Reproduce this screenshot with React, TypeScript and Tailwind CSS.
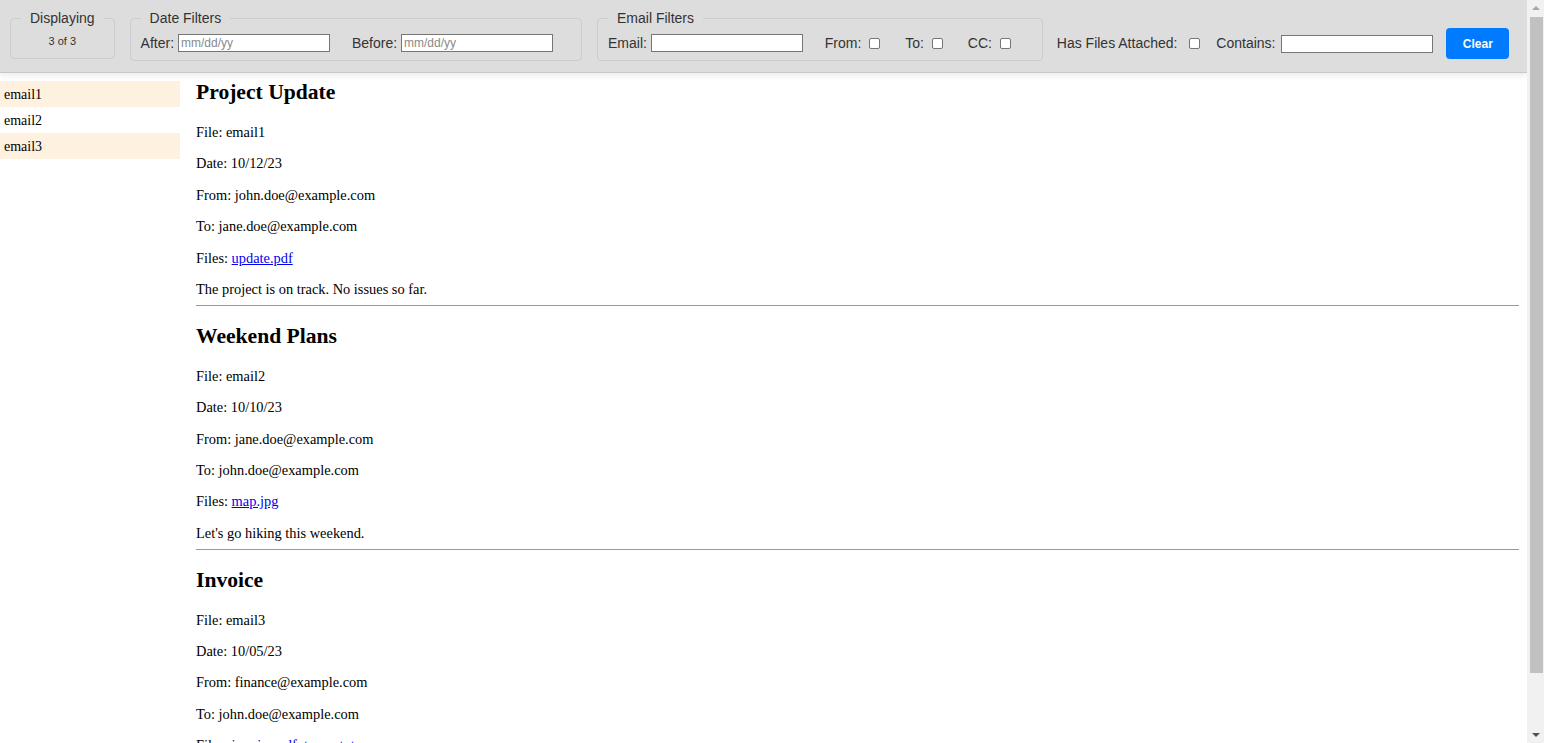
import React from "react";

type Email = {
  id: string;
  subject: string;
  date: string;
  from: string;
  to: string;
  files: string[];
  body: string;
};

const emails: Email[] = [
  {
    id: "email1",
    subject: "Project Update",
    date: "10/12/23",
    from: "john.doe@example.com",
    to: "jane.doe@example.com",
    files: ["update.pdf"],
    body: "The project is on track. No issues so far.",
  },
  {
    id: "email2",
    subject: "Weekend Plans",
    date: "10/10/23",
    from: "jane.doe@example.com",
    to: "john.doe@example.com",
    files: ["map.jpg"],
    body: "Let's go hiking this weekend.",
  },
  {
    id: "email3",
    subject: "Invoice",
    date: "10/05/23",
    from: "finance@example.com",
    to: "john.doe@example.com",
    files: ["invoice.pdf", "terms.txt"],
    body: "Please find the attached invoice.",
  },
];

function Checkbox({ className = "ml-[4px]" }: { className?: string }) {
  return (
    <input
      type="checkbox"
      className={`${className} mr-[3px] h-[11px] w-[11px] appearance-none rounded-[2px] border border-[#767676] bg-white`}
    />
  );
}

function TextBox({ placeholder, className = "" }: { placeholder?: string; className?: string }) {
  return (
    <input
      type="text"
      placeholder={placeholder}
      className={`${className} h-[18px] w-[152px] border border-[#767676] bg-white px-[2px] text-[12px] text-black outline-none placeholder:text-[#8a8a8a]`}
    />
  );
}

function Legend({ children }: { children: React.ReactNode }) {
  return <legend className="px-[9px] text-[14px] leading-[16px] text-[#333]">{children}</legend>;
}

function Header() {
  return (
    <header className="flex h-[73px] shrink-0 items-start border-b border-[#c8c8c8] bg-[#dddddd] pl-[10px] pt-[10px] font-['Liberation_Sans',Arial,sans-serif] text-[14px] text-[#333] shadow-[0_3px_6px_rgba(0,0,0,0.08)]">
      <fieldset className="w-[104px] rounded-[4px] border border-[#cccccc] px-[10px] pb-[8px] pt-[6px]">
        <Legend>Displaying</Legend>
        <div className="flex h-[18px] items-center justify-center text-[11px] text-[#333]">3 of 3</div>
      </fieldset>

      <fieldset className="ml-[15px] rounded-[4px] border border-[#cccccc] pb-[8px] pl-[10px] pr-[28px] pt-[8px]">
        <Legend>Date Filters</Legend>
        <div className="flex h-[18px] items-center gap-[22px]">
          <label className="flex items-center whitespace-pre">
            {"After: "}
            <TextBox placeholder="mm/dd/yy" />
          </label>
          <label className="flex items-center whitespace-pre">
            {"Before: "}
            <TextBox placeholder="mm/dd/yy" />
          </label>
        </div>
      </fieldset>

      <fieldset className="ml-[15px] rounded-[4px] border border-[#cccccc] pb-[8px] pl-[10px] pr-[28px] pt-[8px]">
        <Legend>Email Filters</Legend>
        <div className="flex h-[18px] items-center">
          <label className="mr-[22px] flex items-center whitespace-pre">
            {"Email: "}
            <TextBox />
          </label>
          <label className="mr-[22px] flex items-center whitespace-pre">
            {"From: "}
            <Checkbox />
          </label>
          <label className="mr-[22px] flex items-center whitespace-pre">
            {"To: "}
            <Checkbox />
          </label>
          <label className="flex items-center whitespace-pre">
            {"CC: "}
            <Checkbox />
          </label>
        </div>
      </fieldset>

      <div className="ml-[14px] flex h-[51px] items-center pt-[16px]">
        <label className="mr-[13px] flex items-center whitespace-pre">
          {"Has Files Attached: "}
          <Checkbox className="ml-[8px]" />
        </label>
        <label className="flex items-center whitespace-pre">
          {"Contains: "}
          <TextBox className="ml-[2px]" />
        </label>
        <button className="ml-[13px] h-[31px] w-[63px] rounded-[4px] bg-[#007bff] text-[12px] font-bold text-white">
          Clear
        </button>
      </div>
    </header>
  );
}

function EmailView({ email }: { email: Email }) {
  return (
    <section>
      <h2 className="mb-[19px] text-[21.6px] font-bold leading-[25px]">{email.subject}</h2>
      <p className="mb-[14.6px] leading-[16.8px]">File: {email.id}</p>
      <p className="mb-[14.6px] leading-[16.8px]">Date: {email.date}</p>
      <p className="mb-[14.6px] leading-[16.8px]">From: {email.from}</p>
      <p className="mb-[14.6px] leading-[16.8px]">To: {email.to}</p>
      <p className="mb-[14.6px] leading-[16.8px]">
        Files:{" "}
        {email.files.map((f, i) => (
          <span key={f}>
            {i > 0 && ", "}
            <a href="#" className="text-[#0000ee] underline">
              {f}
            </a>
          </span>
        ))}
      </p>
      <p className="mb-[7.5px] leading-[16.8px]">{email.body}</p>
      <hr className="mb-[17.5px] border-0 border-t border-[#9a9a9a]" />
    </section>
  );
}

// stand-in for the browser's page scrollbar in the screenshot
function ScrollBar() {
  return (
    <div className="flex w-[17px] shrink-0 flex-col items-center bg-[#f1f1f1]">
      <div className="flex h-[16px] items-center justify-center">
        <div className="h-0 w-0 border-x-[4px] border-b-[4px] border-x-transparent border-b-[#a3a3a3]" />
      </div>
      <div className="ml-[1px] mt-[1px] h-[656px] w-[13px] bg-[#c1c1c1]" />
      <div className="flex flex-1 items-end justify-center pb-[6px]">
        <div className="h-0 w-0 border-x-[4px] border-t-[4px] border-x-transparent border-t-[#505050]" />
      </div>
    </div>
  );
}

export default function App() {
  return (
    <div className="flex h-screen overflow-hidden bg-white">
      <div className="flex min-w-0 flex-1 flex-col overflow-hidden">
        <Header />
        <div className="flex font-['Liberation_Serif','Times_New_Roman',serif] text-[14.4px] text-black">
          <aside className="mt-[8px] w-[180px] shrink-0 text-[14px]">
            {emails.map((e, i) => (
              <div
                key={e.id}
                className={
                  i % 2 === 0
                    ? "flex h-[26px] items-center bg-[#fff1e0] pl-[4px]"
                    : "flex h-[26px] items-center pl-[4px]"
                }
              >
                {e.id}
              </div>
            ))}
          </aside>
          <main className="flex-1 pb-[40px] pl-[16px] pr-[8px] pt-[7px]">
            {emails.map((e) => (
              <EmailView key={e.id} email={e} />
            ))}
          </main>
        </div>
      </div>
      <ScrollBar />
    </div>
  );
}
